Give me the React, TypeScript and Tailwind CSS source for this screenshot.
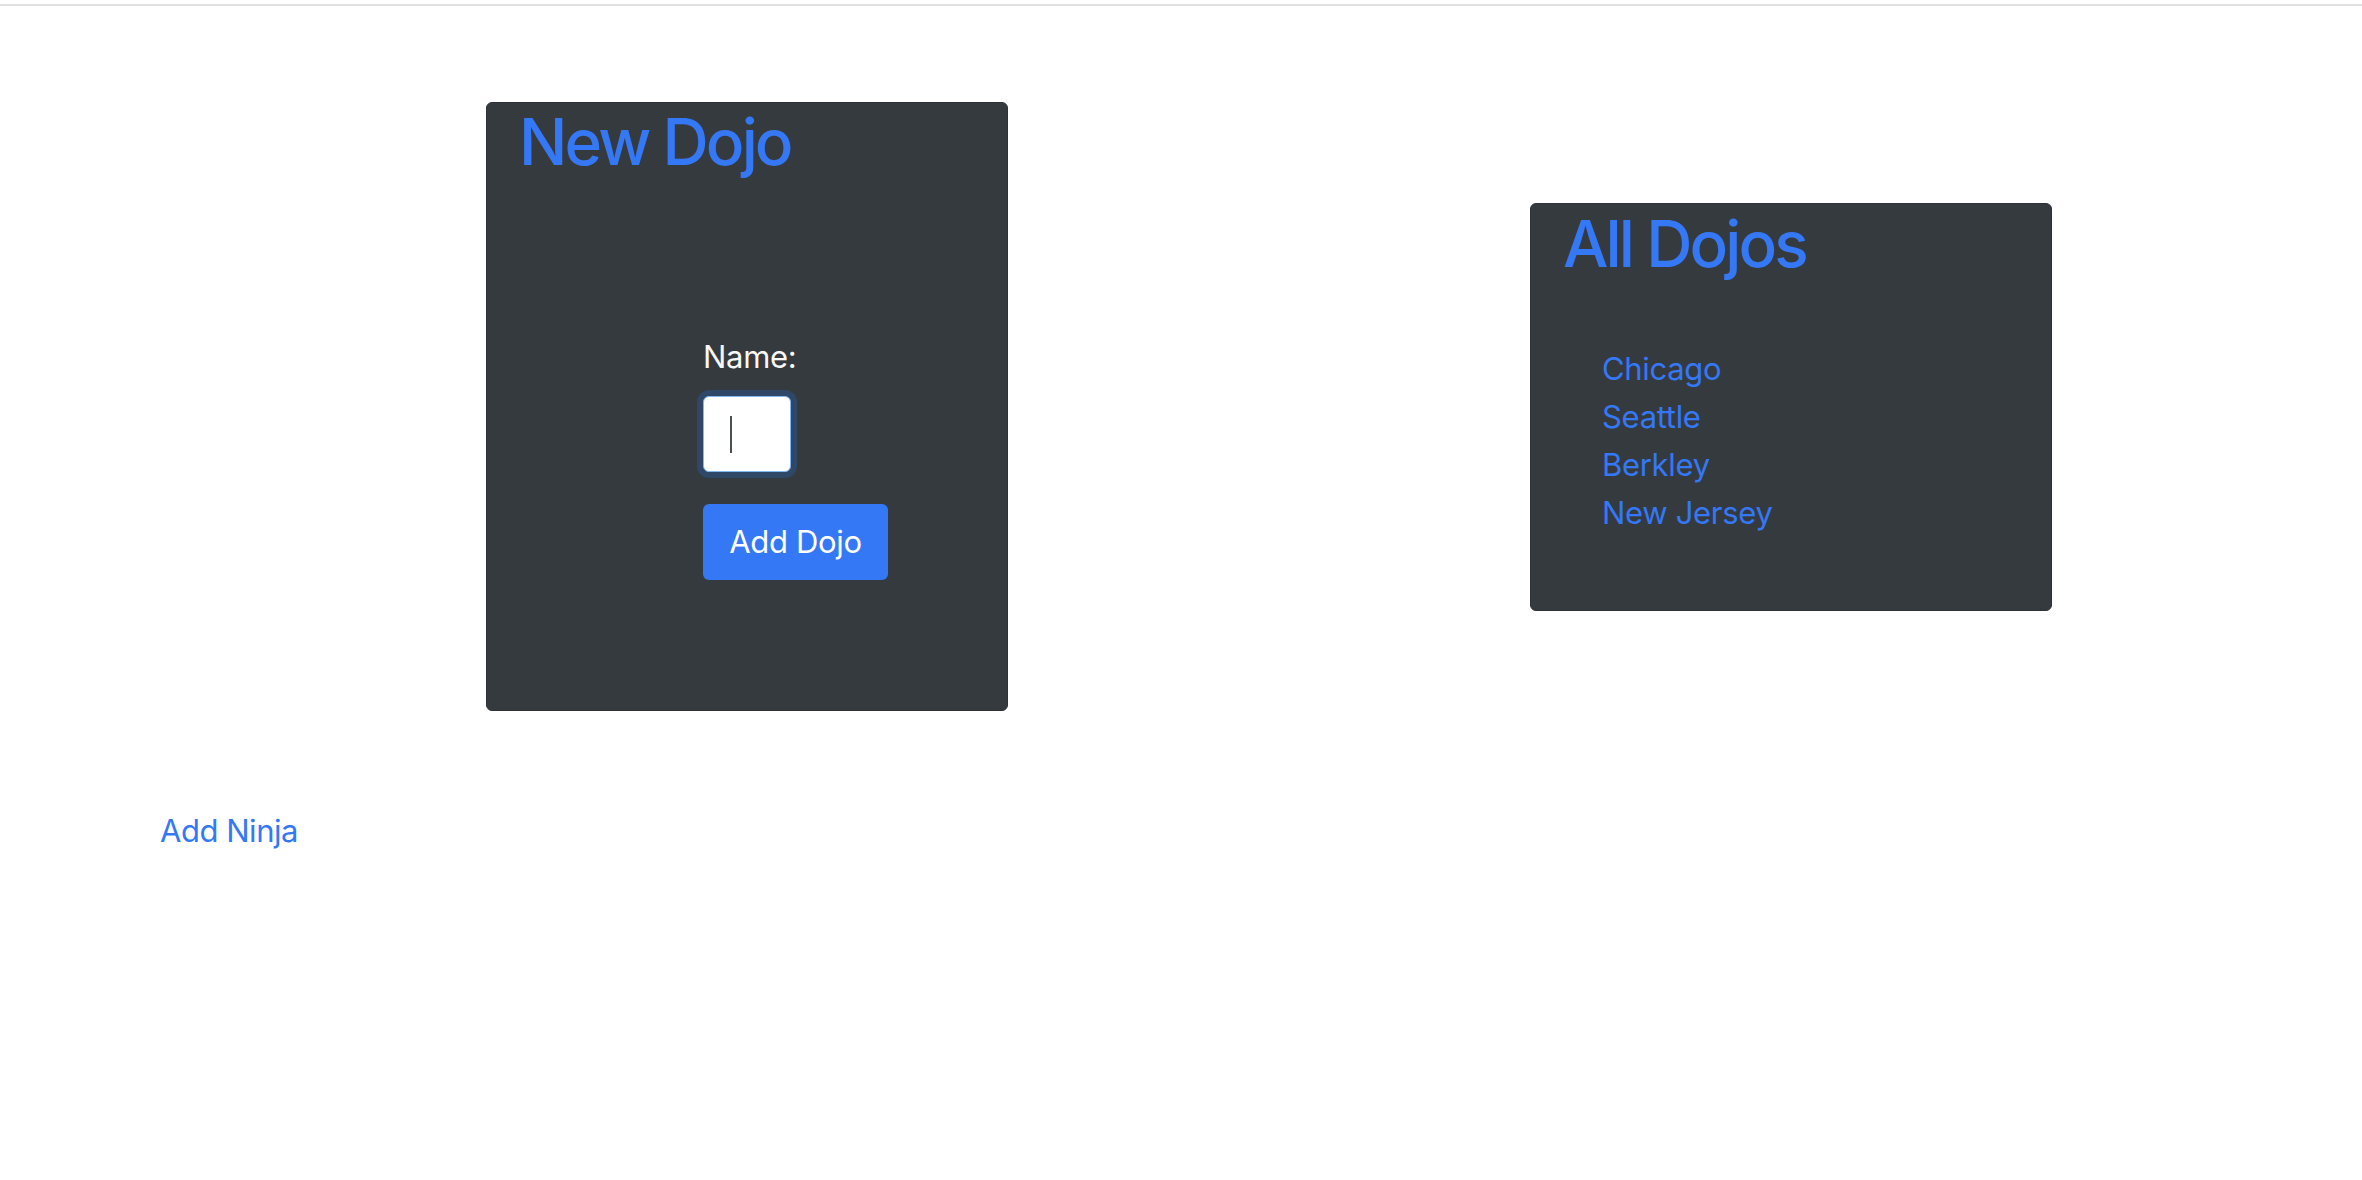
export default function App() {
  return (
    <div className="min-h-screen bg-white font-['Inter','Liberation_Sans',sans-serif] text-[31px] leading-[1.5]">
      <div className="mt-[4px] h-[2px] bg-[#e0e0e0]" />

      <div className="flex items-center gap-[522px] pl-[486px] pt-[96px]">
        <div className="flex h-[609px] w-[522px] flex-col rounded-[6px] border border-[#2e3236] bg-[#353a3f] pl-[32px] pt-[1px]">
          <h1 className="text-[64px] font-medium leading-[1.2] tracking-[-0.045em] text-[#3478f6]">
            New Dojo
          </h1>
          <form className="ml-[184px] mt-[153px] flex flex-col items-start">
            <label className="tracking-[-0.01em] text-[#f7f7f7]">Name:</label>
            <div className="mt-[16px] flex h-[76px] w-[88px] items-center rounded-[6px] border-[1.5px] border-[#84b5f5] bg-white pl-[26px] ring-[6px] ring-[#2f4868]">
              <span className="h-[37px] w-[2px] bg-[#4a4f55]" />
            </div>
            <button
              type="button"
              className="mt-[32px] h-[76px] w-[185px] rounded-[6px] bg-[#3478f6] tracking-[-0.01em] text-white"
            >
              Add Dojo
            </button>
          </form>
        </div>

        <div className="flex h-[408px] w-[522px] flex-col rounded-[6px] border border-[#2e3236] bg-[#353a3f] pl-[32px] pt-[2px]">
          <h1 className="text-[64px] font-medium leading-[1.2] tracking-[-0.045em] text-[#3478f6]">
            All Dojos
          </h1>
          <ul className="ml-[39px] mt-[63px] leading-[48px] tracking-[-0.01em] text-[#3478f6]">
            <li>Chicago</li>
            <li>Seattle</li>
            <li>Berkley</li>
            <li>New Jersey</li>
          </ul>
        </div>
      </div>

      <a href="#" className="ml-[160px] mt-[97px] block w-fit tracking-[-0.015em] text-[#3478f6]">
        Add Ninja
      </a>
    </div>
  );
}
